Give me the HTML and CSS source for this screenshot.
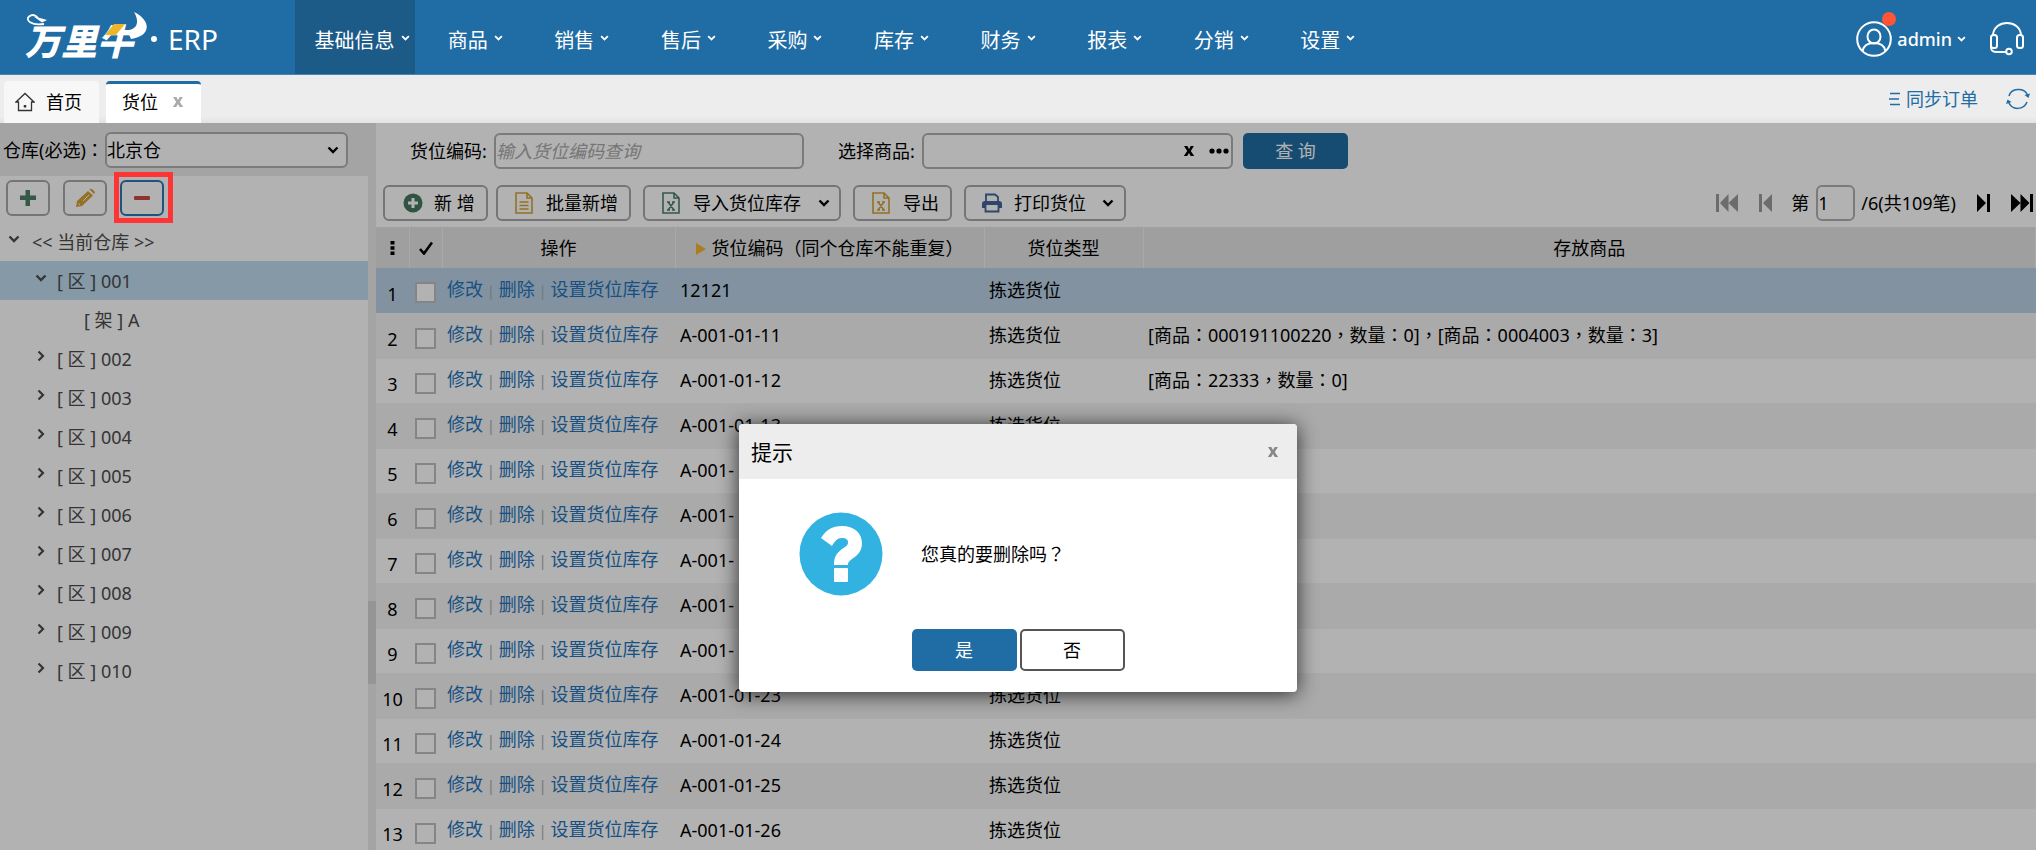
FILE: index.html
```html
<!DOCTYPE html>
<html lang="zh-CN">
<head>
<meta charset="utf-8">
<meta name="viewport" content="width=device-width, initial-scale=1">
<title>货位 - 万里牛 ERP</title>
<link rel="stylesheet" href="styles.css">
</head>
<body>
<svg class="sprite" aria-hidden="true">
  <symbol id="chev-down" viewBox="0 0 12 8"><path d="M1.500 1.500 6 6l4.500-4.500" fill="none" stroke="currentColor" stroke-width="2.400"/></symbol>
  <symbol id="chev-right" viewBox="0 0 8 12"><path d="M1.500 1.500 6 6l-4.500 4.500" fill="none" stroke="currentColor" stroke-width="2.200"/></symbol>
  <symbol id="sheet-x" viewBox="0 0 18 22"><path d="M1 1h11l5 5v15H1zM12 1v5h5" fill="none" stroke="currentColor" stroke-width="1.600"/><path d="M6 10l6 8M12 10l-6 8M5 10h3M10 10h3M5 18h3M10 18h3" fill="none" stroke="currentColor" stroke-width="1.500"/></symbol>
  <symbol id="cross" viewBox="0 0 12 12"><path d="M1 1h3.400L6 3.900 7.700 1h3.200L7.800 5.900 11.200 11H7.700L6 8 4.200 11H.8l3.400-5.100z" fill="currentColor"/></symbol>
</svg>

<header class="topbar">
  <div class="logo">
    <span class="logo-name">万里牛</span>
    <svg class="logo-horns" viewBox="0 0 130 44" aria-hidden="true"><path d="M22 12C9 14 3 8 7 4.500c4-3 8-1 9 2" fill="none" stroke="#fff" stroke-width="1.800"/><path d="M11 4l14 4-5 2.500z" fill="#fff"/><path d="M112 0c17 8 18 24-3 27l-4-9c10 0 13-8 7-18z" fill="#fff"/><path d="M92 12h11l-9 11H83z" fill="#f0b428"/></svg>
    <span class="logo-dot"></span>
    <span class="logo-sub">ERP</span>
  </div>
  <nav class="menu">
    <a class="active" href="#">基础信息<svg class="caret"><use href="#chev-down"/></svg></a>
    <a href="#">商品<svg class="caret"><use href="#chev-down"/></svg></a>
    <a href="#">销售<svg class="caret"><use href="#chev-down"/></svg></a>
    <a href="#">售后<svg class="caret"><use href="#chev-down"/></svg></a>
    <a href="#">采购<svg class="caret"><use href="#chev-down"/></svg></a>
    <a href="#">库存<svg class="caret"><use href="#chev-down"/></svg></a>
    <a href="#">财务<svg class="caret"><use href="#chev-down"/></svg></a>
    <a href="#">报表<svg class="caret"><use href="#chev-down"/></svg></a>
    <a href="#">分销<svg class="caret"><use href="#chev-down"/></svg></a>
    <a href="#">设置<svg class="caret"><use href="#chev-down"/></svg></a>
  </nav>
  <div class="account">
    <button class="user" type="button">
      <span class="avatar"><svg viewBox="0 0 36 36" width="36" height="36" fill="none" stroke="#fff" stroke-width="2"><circle cx="18" cy="18" r="16.800"/><ellipse cx="18" cy="15.500" rx="6.500" ry="7"/><path d="M6.500 30c1-5 4.500-8 11.500-8s10.500 3 11.500 8"/></svg><i class="dot"></i></span>
      <span>admin</span><svg class="caret"><use href="#chev-down"/></svg>
    </button>
    <button class="support" type="button" aria-label="客服"><svg viewBox="0 0 36 34" width="36" height="34" fill="none" stroke="#fff" stroke-width="2"><path d="M4 13C5-3 31-3 32 13"/><rect x="2" y="13" width="6" height="13" rx="2.500"/><rect x="28" y="13" width="6" height="13" rx="2.500"/><path d="M2 20v5c0 4 2 5 6 5h9"/><circle cx="20" cy="29.500" r="2.800"/></svg></button>
  </div>
</header>

<div class="tabs">
  <a class="tab" href="#"><svg width="20" height="20" viewBox="0 0 20 20" fill="none" stroke="#333" stroke-width="1.300"><path d="M1 10 10 1.500 19 10h-2.500v8.500h-13V10z"/><path d="M10 13v2.500" stroke-width="2.500"/></svg>首页</a>
  <a class="tab current" href="#">货位<svg class="tab-x"><use href="#cross"/></svg></a>
  <a class="sync" href="#"><svg width="12" height="14" viewBox="0 0 12 14" stroke="currentColor" stroke-width="1.500"><path d="M1 1.500h10M0 7h10M1 12.500h10"/></svg>同步订单</a>
  <button class="refresh" type="button" aria-label="刷新"><svg width="24" height="22" viewBox="0 0 24 22" fill="none" stroke="currentColor" stroke-width="1.500"><path d="M3 8C5 0 18-1 21.500 7M21 14c-3 8-15 9-18.500 0"/><path d="M24 5.500 22.500 10 18.500 7zM0 16l1.500-4.500L5.500 14z" fill="currentColor" stroke="none"/></svg></button>
</div>

<div class="workspace">
  <aside class="side">
    <div class="warehouse">
      <label class="tc" lang="zh-Hant" for="warehouse">仓库(必选)：</label>
      <span class="select-wrap"><select id="warehouse"><option>北京仓</option></select><svg class="select-arrow"><use href="#chev-down"/></svg></span>
    </div>
    <div class="tree-tools">
      <button type="button" aria-label="新增"><svg width="18" height="18" viewBox="0 0 18 18"><path d="M6.500 1h4.500v5.500h6V11h-6v6H6.500v-6H1V6.500h5.500z" fill="#4e7f66"/></svg></button>
      <button type="button" aria-label="编辑"><svg width="20" height="20" viewBox="0 0 20 20"><path d="M1 19l1-6L13 3l5 4.500L7 18zM14.500 1.500c1-1 2-.8 3 0l1.800 1.800c.8 1 .8 1.800-.3 2.700z" fill="#d3a338"/><path d="M3.500 15.500 5 17M8 13l6-6" stroke="#fff" stroke-width="1"/></svg></button>
      <button class="marked" type="button" aria-label="删除"><svg width="18" height="6" viewBox="0 0 18 6"><rect x="1" y="1" width="16" height="4" rx="1" fill="#c94b41"/></svg></button>
    </div>
    <ul class="tree">
      <li class="root"><svg class="open"><use href="#chev-down"/></svg>&lt;&lt; 当前仓库 &gt;&gt;</li>
      <li class="zone selected"><svg class="open"><use href="#chev-down"/></svg>[ 区 ] 001</li>
      <li class="shelf">[ 架 ] A</li>
      <li class="zone"><svg class="shut"><use href="#chev-right"/></svg>[ 区 ] 002</li>
      <li class="zone"><svg class="shut"><use href="#chev-right"/></svg>[ 区 ] 003</li>
      <li class="zone"><svg class="shut"><use href="#chev-right"/></svg>[ 区 ] 004</li>
      <li class="zone"><svg class="shut"><use href="#chev-right"/></svg>[ 区 ] 005</li>
      <li class="zone"><svg class="shut"><use href="#chev-right"/></svg>[ 区 ] 006</li>
      <li class="zone"><svg class="shut"><use href="#chev-right"/></svg>[ 区 ] 007</li>
      <li class="zone"><svg class="shut"><use href="#chev-right"/></svg>[ 区 ] 008</li>
      <li class="zone"><svg class="shut"><use href="#chev-right"/></svg>[ 区 ] 009</li>
      <li class="zone"><svg class="shut"><use href="#chev-right"/></svg>[ 区 ] 010</li>
    </ul>
  </aside>
  <div class="splitter"><span></span></div>
  <main class="main">
    <form class="search">
      <label for="code">货位编码:</label>
      <input id="code" type="text" placeholder="输入货位编码查询">
      <label class="second" for="goods">选择商品:</label>
      <span class="picker"><input id="goods" type="text"><button type="button" aria-label="清除"><svg width="12" height="12"><use href="#cross"/></svg></button><button type="button" aria-label="更多"><svg width="20" height="6" viewBox="0 0 20 6"><circle cx="3" cy="3" r="2.600"/><circle cx="10" cy="3" r="2.600"/><circle cx="17" cy="3" r="2.600"/></svg></button></span>
      <button class="query" type="button">查 询</button>
    </form>
    <div class="toolbar">
      <button type="button" class="add"><svg width="20" height="20" viewBox="0 0 20 20"><circle cx="10" cy="10" r="9.500" fill="#46785f"/><path d="M8.500 5h3v3.500H15v3h-3.500V15h-3v-3.500H5v-3h3.500z" fill="#fff"/></svg>新 增</button>
      <button type="button" class="batch"><svg width="18" height="22" viewBox="0 0 18 22" fill="none" stroke="#d3a338" stroke-width="1.600"><path d="M1 1h11l5 5v15H1zM12 1v5h5M4.500 10h9M4.500 13.500h9M4.500 17h9"/></svg>批量新增</button>
      <button type="button" class="import"><svg class="green" width="18" height="22"><use href="#sheet-x"/></svg>导入货位库存<svg class="more"><use href="#chev-down"/></svg></button>
      <button type="button" class="export"><svg class="gold" width="18" height="22"><use href="#sheet-x"/></svg>导出</button>
      <button type="button" class="print"><svg width="20" height="20" viewBox="0 0 20 20"><path d="M4 9V1.500h9L16 4v5" fill="none" stroke="#44639b" stroke-width="1.800"/><path d="M0 11c0-2 1-3 3-3h14c2 0 3 1 3 3v4h-3v-3H3v3H0z" fill="#44639b"/><path d="M3.500 12v6.500h13V12" fill="none" stroke="#44639b" stroke-width="1.800"/></svg>打印货位<svg class="more"><use href="#chev-down"/></svg></button>
      <div class="pager">
        <button type="button" disabled aria-label="首页"><svg width="22" height="18" viewBox="0 0 22 18"><path d="M0 0h3v18H0zM12.500 0v18L4 9zM22 0v18L12.500 9z"/></svg></button>
        <button type="button" disabled aria-label="上一页"><svg width="13" height="18" viewBox="0 0 13 18"><path d="M0 0h3v18H0zM13 0v18L4 9z"/></svg></button>
        <label for="page">第</label><input id="page" type="text" value="1"><span class="total">/6(共109笔)</span>
        <button type="button" aria-label="下一页"><svg width="13" height="18" viewBox="0 0 13 18"><path d="M10 0h3v18h-3zM0 0v18l9-9z"/></svg></button>
        <button type="button" aria-label="末页"><svg width="22" height="18" viewBox="0 0 22 18"><path d="M19 0h3v18h-3zM0 0v18l9.500-9zM9.500 0v18l9-9z"/></svg></button>
      </div>
    </div>
    <table class="grid">
      <colgroup><col class="c-no"><col class="c-check"><col class="c-ops"><col class="c-code"><col class="c-type"><col></colgroup>
      <thead><tr>
        <th><svg width="5" height="16" viewBox="0 0 5 16"><path d="M.5 1h4v3.500h-4zM.5 6.300h4v3.500h-4zM.5 11.600h4v3.500h-4z"/></svg></th>
        <th><svg width="14" height="14" viewBox="0 0 14 14"><path d="M1 8l4 4.500L13 1.500" fill="none" stroke="#000" stroke-width="2.600"/></svg></th>
        <th>操作</th>
        <th class="tc" lang="zh-Hant"><span class="sort"></span>货位编码（同个仓库不能重复）</th>
        <th>货位类型</th>
        <th>存放商品</th>
      </tr></thead>
      <tbody>
        <tr class="picked"><td>1</td><td><input type="checkbox" aria-label="选择第1行"></td><td><a href="#">修改</a><a href="#">删除</a><a href="#">设置货位库存</a></td><td>12121</td><td>拣选货位</td><td></td></tr>
        <tr><td>2</td><td><input type="checkbox" aria-label="选择第2行"></td><td><a href="#">修改</a><a href="#">删除</a><a href="#">设置货位库存</a></td><td>A-001-01-11</td><td>拣选货位</td><td class="tc" lang="zh-Hant">[商品：000191100220，数量：0]，[商品：0004003，数量：3]</td></tr>
        <tr><td>3</td><td><input type="checkbox" aria-label="选择第3行"></td><td><a href="#">修改</a><a href="#">删除</a><a href="#">设置货位库存</a></td><td>A-001-01-12</td><td>拣选货位</td><td class="tc" lang="zh-Hant">[商品：22333，数量：0]</td></tr>
        <tr><td>4</td><td><input type="checkbox" aria-label="选择第4行"></td><td><a href="#">修改</a><a href="#">删除</a><a href="#">设置货位库存</a></td><td>A-001-01-13</td><td>拣选货位</td><td></td></tr>
        <tr><td>5</td><td><input type="checkbox" aria-label="选择第5行"></td><td><a href="#">修改</a><a href="#">删除</a><a href="#">设置货位库存</a></td><td>A-001-</td><td></td><td></td></tr>
        <tr><td>6</td><td><input type="checkbox" aria-label="选择第6行"></td><td><a href="#">修改</a><a href="#">删除</a><a href="#">设置货位库存</a></td><td>A-001-</td><td></td><td></td></tr>
        <tr><td>7</td><td><input type="checkbox" aria-label="选择第7行"></td><td><a href="#">修改</a><a href="#">删除</a><a href="#">设置货位库存</a></td><td>A-001-</td><td></td><td></td></tr>
        <tr><td>8</td><td><input type="checkbox" aria-label="选择第8行"></td><td><a href="#">修改</a><a href="#">删除</a><a href="#">设置货位库存</a></td><td>A-001-</td><td></td><td></td></tr>
        <tr><td>9</td><td><input type="checkbox" aria-label="选择第9行"></td><td><a href="#">修改</a><a href="#">删除</a><a href="#">设置货位库存</a></td><td>A-001-</td><td></td><td></td></tr>
        <tr><td>10</td><td><input type="checkbox" aria-label="选择第10行"></td><td><a href="#">修改</a><a href="#">删除</a><a href="#">设置货位库存</a></td><td>A-001-01-23</td><td>拣选货位</td><td></td></tr>
        <tr><td>11</td><td><input type="checkbox" aria-label="选择第11行"></td><td><a href="#">修改</a><a href="#">删除</a><a href="#">设置货位库存</a></td><td>A-001-01-24</td><td>拣选货位</td><td></td></tr>
        <tr><td>12</td><td><input type="checkbox" aria-label="选择第12行"></td><td><a href="#">修改</a><a href="#">删除</a><a href="#">设置货位库存</a></td><td>A-001-01-25</td><td>拣选货位</td><td></td></tr>
        <tr><td>13</td><td><input type="checkbox" aria-label="选择第13行"></td><td><a href="#">修改</a><a href="#">删除</a><a href="#">设置货位库存</a></td><td>A-001-01-26</td><td>拣选货位</td><td></td></tr>
      </tbody>
    </table>
  </main>
  <div class="mask">
    <section class="dialog" role="dialog" aria-labelledby="dialog-title">
      <header><h2 id="dialog-title">提示</h2><button type="button" aria-label="关闭"><svg width="12" height="12"><use href="#cross"/></svg></button></header>
      <div class="message">
        <svg width="84" height="84" viewBox="0 0 84 84"><circle cx="42" cy="42" r="41.500" fill="#31b2e1"/><path d="M22 26C27 18 33 14 43 14c12 0 20 7 20 17 0 8-4 12-10 16-4 3-4 4-4 6H35c0-9 3-12 8-16 5-3 6-4 6-7 0-2-2-4-6-4-5 0-7 3-10 8z" fill="#fff"/><rect x="35" y="56" width="14" height="14" rx="1" fill="#fff"/></svg>
        <p class="tc" lang="zh-Hant">您真的要删除吗？</p>
      </div>
      <footer><button class="yes" type="button">是</button><button class="no" type="button">否</button></footer>
    </section>
  </div>
</div>
</body>
</html>
```
FILE: styles.css
```css
* { box-sizing: border-box; }
body {
  margin: 0;
  height: 100vh;
  overflow: hidden;
  display: flex;
  flex-direction: column;
  font: 18px/24px "Noto Sans", "Noto Sans CJK SC", sans-serif;
  color: #000;
  background: #fff;
}
.tc { font-family: "Noto Sans", "Noto Sans CJK TC", sans-serif; }
a { color: inherit; text-decoration: none; }
button, input, select { font: inherit; color: inherit; margin: 0; }
button { padding: 0; border: 0; background: none; white-space: nowrap; }
svg { flex: none; display: block; }
.sprite { position: absolute; width: 0; height: 0; }

/* top bar */
.topbar {
  flex: none;
  height: 75px;
  display: flex;
  background: #206ca4;
  border-bottom: 1px solid #4786b4;
  color: #fff;
}
.logo { position: relative; flex: none; width: 295px; padding: 4px 0 0 25px; display: flex; align-items: center; }
.logo-name { font: italic 900 36px/44px "Noto Sans CJK SC", sans-serif; width: 126px; white-space: nowrap; }
.logo-horns { position: absolute; left: 22px; top: 12px; width: 130px; height: 44px; }
.logo-dot { width: 6px; height: 6px; border-radius: 50%; background: #fff; }
.logo-sub { font-size: 28px; line-height: 36px; padding-left: 11px; }
.menu { display: flex; flex: none; width: 1079px; }
.menu a {
  flex: 1;
  display: flex;
  align-items: center;
  justify-content: center;
  gap: 6px;
  padding: 8px 0 0 14px;
  font-size: 20px;
}
.menu .active { flex: 0 0 120px; background: #1c5a88; }
.caret { width: 9px; height: 6px; }
.menu .caret { margin-bottom: 6px; }
.account { margin-left: auto; padding: 3px 11px 0 0; display: flex; align-items: center; gap: 23px; }
.user { display: flex; align-items: center; gap: 5px; font-weight: 500; }
.avatar { position: relative; }
.dot { position: absolute; right: -4px; top: -9px; width: 14px; height: 14px; border-radius: 50%; background: #ff5436; }

/* page tabs */
.tabs {
  flex: none;
  height: 48px;
  padding: 6px 6px 0 4px;
  display: flex;
  align-items: stretch;
  background: linear-gradient(#ededed 85%, #e3e3e3);
}
.tab { width: 95px; display: flex; align-items: center; gap: 11px; padding: 0 0 3px 11px; background: #f7f7f7; border-radius: 4px 4px 0 0; border-top: 3px solid transparent; }
.tab.current { margin-left: 7px; gap: 14px; padding-left: 16px; background: #fff; border-top-color: #206ca4; }
.tab-x { width: 12px; height: 12px; color: #aaa; }
.sync { margin-left: auto; display: flex; align-items: center; gap: 5px; color: #206ca4; padding-bottom: 6px; }
.refresh { margin-left: 28px; color: #206ca4; padding-bottom: 6px; }

/* workspace */
.workspace { position: relative; flex: 1; min-height: 0; display: flex; overflow: hidden; }
.side { flex: none; width: 368px; }
.warehouse { height: 53px; display: flex; align-items: center; padding-left: 3px; background: #ebebeb; }
.warehouse label { flex: none; width: 102px; white-space: nowrap; }
.select-wrap { position: relative; }
select, input[type="text"] { border: 2px solid #b0b0b0; border-radius: 6px; background: #fff; height: 36px; padding: 0; }
select { appearance: none; width: 243px; display: block; }
.select-arrow { position: absolute; right: 9px; top: 14px; width: 12px; height: 8px; }
.tree-tools { display: flex; gap: 13px; padding: 4px 6px 6px; }
.tree-tools button { position: relative; width: 44px; height: 36px; display: flex; align-items: center; justify-content: center; border: 2px solid #a8a8a8; border-radius: 6px; }
.tree-tools .marked { border-color: #2a78b5; }
.marked::after { content: ""; position: absolute; z-index: 3; inset: -10px -11px -9px -8px; border: 5px solid #ff3535; }
.tree { list-style: none; margin: 0; padding: 0; color: #4c4c4c; }
.tree li { height: 39px; display: flex; align-items: center; }
.tree svg { margin-bottom: 6px; }
.tree .open { width: 12px; height: 8px; }
.tree .shut { width: 8px; height: 12px; margin-right: 2px; margin-left: 2px; }
.tree .root { padding-left: 8px; gap: 12px; }
.tree .zone { padding-left: 35px; gap: 10px; }
.tree .shelf { padding-left: 84px; }
.tree .selected { background: #c0dbee; }
.splitter { flex: none; width: 8px; background: #ebebeb; padding-top: 478px; }
.splitter span { display: block; height: 83px; background: #d6d6d6; }
.main { flex: 1; min-width: 0; }
.search { display: flex; align-items: center; padding: 10px 0 6px 34px; white-space: nowrap; }
.search label { width: 84px; }
.search .second { margin-left: 34px; }
.search input { width: 310px; }
.search input::placeholder { color: #aaa; font-style: italic; opacity: 1; }
.picker { display: flex; align-items: center; gap: 14px; width: 311px; height: 36px; padding-right: 2px; border: 2px solid #b0b0b0; border-radius: 6px; }
.search .picker input { flex: 1; min-width: 0; border: 0; height: 30px; }
.query { width: 105px; height: 36px; margin-left: 10px; border-radius: 5px; background: #206ca4; color: #fff; }
.toolbar { display: flex; align-items: center; padding: 10px 3px 6px 7px; }
.toolbar > button { height: 36px; display: flex; align-items: center; border: 2px solid #a8a8a8; border-radius: 6px; padding: 0 12px 0 17px; gap: 13px; }
.toolbar > .add { width: 105px; padding-left: 18px; gap: 11px; }
.toolbar > .batch { margin-left: 8px; width: 135px; }
.toolbar > .import { margin-left: 12px; width: 198px; }
.toolbar > .export { margin-left: 12px; width: 99px; }
.toolbar > .print { margin-left: 12px; width: 162px; gap: 12px; padding-left: 16px; }
.more { width: 12px; height: 8px; margin-left: 4px; }
.green { color: #4e7f6c; }
.gold { color: #d3a338; }
.pager { margin-left: auto; display: flex; align-items: center; white-space: nowrap; }
.pager button { fill: #000; margin-left: 21px; }
.pager button:first-child { margin-left: 0; }
.pager button:disabled { fill: #9b9b9b; }
.pager label { margin: 0 7px 0 19px; }
.pager input { width: 39px; }
.total { margin-left: 6px; }

/* storage table */
.grid { width: 100%; table-layout: fixed; border-collapse: collapse; }
.c-no { width: 33px; }
.c-check { width: 33px; }
.c-ops { width: 233px; }
.c-code { width: 309px; }
.c-type { width: 159px; }
.grid th { height: 41px; padding: 0; font-weight: 400; background: #e4e4e4; border-right: 1px solid #f2f2f2; white-space: nowrap; }
.grid th svg { margin: 0 auto; }
.sort { display: inline-block; margin-right: 6px; border: 6px solid transparent; border-left: 10px solid #f5b22f; border-right: 0; }
.grid td { height: 45px; padding: 0 0 1px 5px; border-bottom: 1px solid #f5f5f5; white-space: nowrap; }
.grid td:nth-child(1) { padding: 7px 0 0; text-align: center; }
.grid td:nth-child(2) { padding: 5px 0 0 6px; }
.grid tbody tr:nth-child(even) { background: #f4f4f4; }
.grid .picked { background: #bad2e5; }
.grid a { color: #2373bb; }
.grid a + a::before { content: "|"; margin: 0 4px; font-size: 14px; color: #aaa; }
.grid input { appearance: none; display: block; width: 21px; height: 21px; border: 2px solid #bfbfbf; background: #fff; }

/* dialog */
.mask { position: absolute; inset: 0; z-index: 2; padding-top: 301px; background: rgba(0, 0, 0, .3); }
.dialog { width: 558px; margin: 0 auto; background: #fff; border-radius: 4px; overflow: hidden; box-shadow: 0 2px 20px rgba(0, 0, 0, .75); }
.dialog header { display: flex; align-items: center; justify-content: space-between; height: 55px; padding: 0 18px 0 12px; background: #ededed; color: #888; }
.dialog h2 { margin: 0; font-size: 21px; font-weight: 400; color: #000; }
.message { display: flex; align-items: center; gap: 38px; padding: 33px 60px; }
.message p { margin: 0; }
.dialog footer { display: flex; justify-content: center; gap: 3px; padding-bottom: 21px; }
.dialog footer button { width: 105px; height: 42px; border-radius: 5px; }
.dialog .yes { background: #206ca4; color: #fff; }
.dialog .no { border: 2px solid #555; }
```
